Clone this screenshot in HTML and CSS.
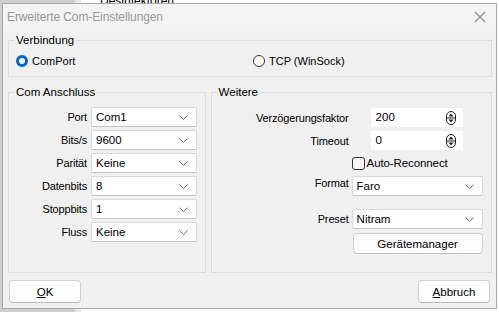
FILE: index.html
```html
<!DOCTYPE html>
<html lang="de">
<head>
  <meta charset="UTF-8">
  <link rel="stylesheet" href="styles.css">
  <title>Erweiterte Com-Einstellungen</title>
</head>
<body>
  <div id="desktop">
    <div class="bgWindow"><span class="bgText">Desinfektoren</span></div>

    <div id="dialog">
      <div class="titleBar">
        <span class="titleText">Erweiterte Com-Einstellungen</span>
        <svg class="btnClose" width="12" height="12" viewBox="0 0 12 12">
          <path d="M1 1 L11 11 M11 1 L1 11" stroke="#8c8c8c" stroke-width="1.1" fill="none"/>
        </svg>
      </div>

      <div class="dialogBody">
        <fieldset class="groupBox groupVerbindung">
          <legend>Verbindung</legend>
          <div class="radioRow">
            <label class="radio radioOn"><span class="radioDot"></span>ComPort</label>
            <label class="radio"><span class="radioDot"></span>TCP (WinSock)</label>
          </div>
        </fieldset>

        <div class="groupColumns">
          <fieldset class="groupBox groupAnschluss">
            <legend>Com Anschluss</legend>
            <div class="formGrid">
              <span class="fieldLabel">Port</span>
              <div class="combo">Com1<svg class="chevron" width="9" height="5" viewBox="0 0 9 5"><path d="M0.5 0.5 L4.5 4.5 L8.5 0.5" stroke="#6e6e6e" fill="none"/></svg></div>
              <span class="fieldLabel">Bits/s</span>
              <div class="combo">9600<svg class="chevron" width="9" height="5" viewBox="0 0 9 5"><path d="M0.5 0.5 L4.5 4.5 L8.5 0.5" stroke="#6e6e6e" fill="none"/></svg></div>
              <span class="fieldLabel">Parität</span>
              <div class="combo">Keine<svg class="chevron" width="9" height="5" viewBox="0 0 9 5"><path d="M0.5 0.5 L4.5 4.5 L8.5 0.5" stroke="#6e6e6e" fill="none"/></svg></div>
              <span class="fieldLabel">Datenbits</span>
              <div class="combo">8<svg class="chevron" width="9" height="5" viewBox="0 0 9 5"><path d="M0.5 0.5 L4.5 4.5 L8.5 0.5" stroke="#6e6e6e" fill="none"/></svg></div>
              <span class="fieldLabel">Stoppbits</span>
              <div class="combo">1<svg class="chevron" width="9" height="5" viewBox="0 0 9 5"><path d="M0.5 0.5 L4.5 4.5 L8.5 0.5" stroke="#6e6e6e" fill="none"/></svg></div>
              <span class="fieldLabel">Fluss</span>
              <div class="combo">Keine<svg class="chevron" width="9" height="5" viewBox="0 0 9 5"><path d="M0.5 0.5 L4.5 4.5 L8.5 0.5" stroke="#6e6e6e" fill="none"/></svg></div>
            </div>
          </fieldset>

          <fieldset class="groupBox groupWeitere">
            <legend>Weitere</legend>
            <div class="weitereGrid">
              <span class="fieldLabel">Verzögerungsfaktor</span>
              <div class="spin">200<svg class="spinArrows" width="10" height="14" viewBox="0 0 10 14"><rect x="0.5" y="0.5" width="9" height="13" rx="4.5" fill="#fff" stroke="#222"/><path d="M0.5 7 H9.5" stroke="#222"/><path d="M2.5 5.5 L5 2.5 L7.5 5.5 Z" fill="#222"/><path d="M2.5 8.5 L5 11.5 L7.5 8.5 Z" fill="#222"/></svg></div>

              <span class="fieldLabel rowTimeout">Timeout</span>
              <div class="spin rowTimeout">0<svg class="spinArrows" width="10" height="14" viewBox="0 0 10 14"><rect x="0.5" y="0.5" width="9" height="13" rx="4.5" fill="#fff" stroke="#222"/><path d="M0.5 7 H9.5" stroke="#222"/><path d="M2.5 5.5 L5 2.5 L7.5 5.5 Z" fill="#222"/><path d="M2.5 8.5 L5 11.5 L7.5 8.5 Z" fill="#222"/></svg></div>

              <span></span>
              <label class="checkRow"><span class="checkBox"></span>Auto-Reconnect</label>

              <span class="fieldLabel">Format</span>
              <div class="combo comboWide">Faro<svg class="chevron" width="9" height="5" viewBox="0 0 9 5"><path d="M0.5 0.5 L4.5 4.5 L8.5 0.5" stroke="#6e6e6e" fill="none"/></svg></div>

              <span class="fieldLabel rowPreset">Preset</span>
              <div class="combo comboWide rowPreset">Nitram<svg class="chevron" width="9" height="5" viewBox="0 0 9 5"><path d="M0.5 0.5 L4.5 4.5 L8.5 0.5" stroke="#6e6e6e" fill="none"/></svg></div>

              <span></span>
              <button class="btn btnManager">Gerätemanager</button>
            </div>
          </fieldset>
        </div>

        <div class="buttonRow">
          <button class="btn btnOk"><u>O</u>K</button>
          <button class="btn btnCancel"><u>A</u>bbruch</button>
        </div>
      </div>
    </div>
  </div>
</body>
</html>
```

FILE: styles.css
```css
* {
  box-sizing: border-box;
}
body {
  margin: 0;
  font-family: "Liberation Sans", Arial, sans-serif;
  font-size: 11px;
  color: #000000;
}
#desktop {
  position: relative;
  width: 499px;
  height: 312px;
  overflow: hidden;
  background: #cfcfcf;
}
.bgWindow {
  position: absolute;
  left: 75px;
  top: -10px;
  width: 424px;
  height: 330px;
  background: #ffffff;
  border-left: 6px solid #e6e6e6;
}
.bgText {
  position: absolute;
  left: 19px;
  top: 4px;
  font-size: 12px;
}

#dialog {
  position: absolute;
  left: 2px;
  top: 3px;
  width: 495px;
  height: 306px;
  background: #f0f0f0;
  border: 1px solid #a8a8a8;
  display: flex;
  flex-direction: column;
}
.titleBar {
  height: 27px;
  display: flex;
  align-items: center;
  justify-content: space-between;
  padding: 0 10px 1px 4px;
  background: #f3f3f3;
}
.titleText {
  font-size: 12px;
  color: #999999;
  letter-spacing: -0.1px;
}
.btnClose {
  margin-right: 0;
}

.dialogBody {
  flex: 1;
  padding: 2px 4px 0 5px;
  display: flex;
  flex-direction: column;
}

.groupBox {
  margin: 0;
  border: 1px solid #dcdcdc;
  padding: 0;
  min-width: 0;
}
.groupBox legend {
  margin-left: 5px;
  padding: 0 2px 0 2px;
  font-size: 11.5px;
  line-height: 14px;
}
.groupVerbindung {
  height: 44px;
}
.radioRow {
  display: flex;
  padding: 7px 0 0 7px;
}
.radio {
  display: flex;
  align-items: center;
  gap: 4px;
  width: 237px;
  height: 14px;
}
.radioDot {
  width: 12px;
  height: 12px;
  border-radius: 50%;
  border: 1px solid #333333;
  background: #ffffff;
}
.radioOn .radioDot {
  border: 3px solid #0067c0;
}

.groupColumns {
  display: flex;
  gap: 5px;
  margin-top: 8px;
  height: 188px;
}
.groupAnschluss {
  width: 198px;
}
.groupWeitere {
  width: 282px;
}

.formGrid {
  display: grid;
  grid-template-columns: 78px 106px;
  grid-auto-rows: 20px;
  column-gap: 4px;
  row-gap: 3px;
  padding-top: 8px;
}
.fieldLabel {
  text-align: right;
  align-self: center;
  letter-spacing: -0.15px;
}
.combo {
  position: relative;
  height: 20px;
  line-height: 18px;
  padding-left: 4px;
  background: #ffffff;
  border: 1px solid #d9d9d9;
  border-bottom-color: #c4c4c4;
  border-radius: 2px;
  font-size: 11.5px;
}
.chevron {
  position: absolute;
  right: 8px;
  top: 7px;
}

.weitereGrid {
  display: grid;
  grid-template-columns: 137px 131px;
  column-gap: 3px;
  padding-top: 9px;
}
.spin {
  position: relative;
  margin-left: 19px;
  width: 92px;
  height: 19px;
  line-height: 17px;
  padding-left: 4px;
  background: #ffffff;
  border: 1px solid #ffffff;
  font-size: 11.5px;
}
.spinArrows {
  position: absolute;
  right: 6px;
  top: 2px;
}
.rowTimeout {
  margin-top: 4px;
}
.checkRow {
  display: flex;
  align-items: center;
  gap: 2px;
  height: 14px;
  margin-top: 6px;
  font-size: 11.5px;
  letter-spacing: -0.1px;
}
.checkBox {
  width: 13px;
  height: 13px;
  border: 1px solid #333333;
  border-radius: 3px;
  background: #f7f7f7;
}
.comboWide {
  margin-top: 6px;
}
.rowPreset {
  margin-top: 13px;
}
.btn {
  font-family: "Liberation Sans", Arial, sans-serif;
  font-size: 11.5px;
  background: #fdfdfd;
  border: 1px solid #d0d0d0;
  border-bottom-color: #bcbcbc;
  border-radius: 4px;
  padding: 0;
  color: #000000;
}
.btnManager {
  margin: 4px 0 0 1px;
  width: 130px;
  height: 21px;
}

.buttonRow {
  display: flex;
  justify-content: space-between;
  padding: 7px 2px 0 1px;
}
.btnOk {
  width: 72px;
  height: 23px;
}
.btnCancel {
  width: 72px;
  height: 23px;
}
```
